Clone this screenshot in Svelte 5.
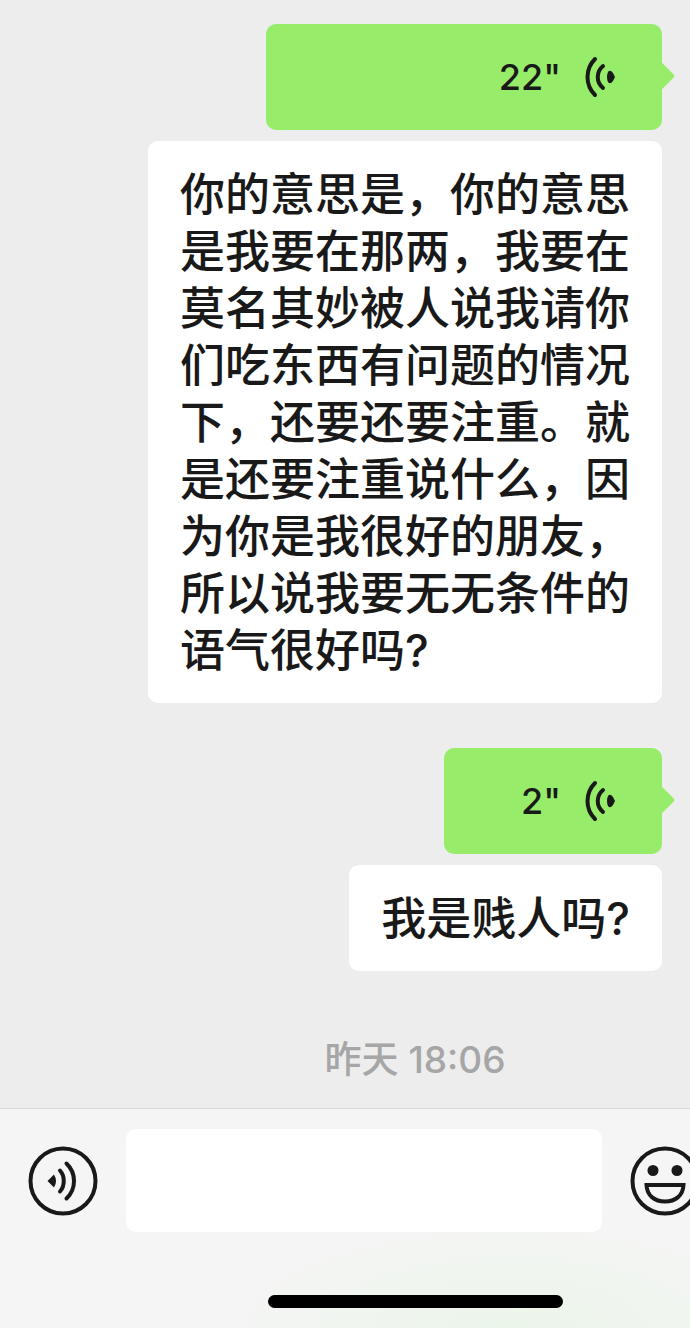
<script lang="ts">
    type Message = {
        id: number;
        seconds: number;
        size: "long" | "short";
        transcript: string;
    };

    const messages: Message[] = [
        {
            id: 1,
            seconds: 22,
            size: "long",
            transcript:
                "你的意思是，你的意思是我要在那两，我要在莫名其妙被人说我请你们吃东西有问题的情况下，还要还要注重。就是还要注重说什么，因为你是我很好的朋友，所以说我要无无条件的语气很好吗?",
        },
        { id: 2, seconds: 2, size: "short", transcript: "我是贱人吗?" },
    ];

    let draft = $state("");
</script>

<div class="screen">
    <main class="chat">
        {#each messages as message (message.id)}
            <div class="message">
                <button class="voice {message.size}" aria-label="播放语音 {message.seconds} 秒">
                    <span>{message.seconds}"</span>
                    <svg class="wave" viewBox="0 0 32 42" aria-hidden="true">
                        <path d="M11 3C1 13 1 29 11 39" stroke-width="4" />
                        <path d="M19 10C12 16 12 26 19 32" stroke-width="4" />
                        <path class="dot" d="M24 16Q26 13 29 17L31 21L29 25Q26 29 24 26Q22 21 24 16Z" />
                    </svg>
                </button>
                <p class="transcript">{message.transcript}</p>
            </div>
        {/each}
        <time class="time">昨天 18:06</time>
    </main>

    <footer class="composer">
        <div class="row">
            <button class="icon" aria-label="语音输入">
                <svg viewBox="0 0 70 70" aria-hidden="true">
                    <circle cx="35" cy="35" r="32.5" />
                    <path class="solid" d="M19.5 35L26 28.5Q30 35 26 41.5Z" />
                    <path d="M32 24.5C37 30 37 40 32 45.5" />
                    <path d="M38.5 17.5C48.5 27 48.5 43 38.5 52.5" />
                </svg>
            </button>
            <input type="text" aria-label="消息" bind:value={draft} />
            <button class="icon" aria-label="表情">
                <svg viewBox="0 0 70 70" aria-hidden="true">
                    <circle cx="35" cy="35" r="32.5" />
                    <circle class="solid" cx="23" cy="24.5" r="5.5" />
                    <circle class="solid" cx="47" cy="24.5" r="5.5" />
                    <path class="mouth" d="M16.5 39H53.5C53 50 45 55.5 35 55.5S17 50 16.5 39Z" />
                </svg>
            </button>
        </div>
        <div class="home"><span></span></div>
    </footer>
</div>

<style>
    :global(body) {
        margin: 0;
        background: #ededed;
    }

    .screen {
        display: flex;
        flex-direction: column;
        min-height: 100vh;
        overflow-x: hidden;
        font-family: Inter, "Noto Sans CJK SC", sans-serif;
        color: #191919;
    }

    button {
        padding: 0;
        border: 0;
        font: inherit;
        color: inherit;
        cursor: pointer;
    }

    svg {
        display: block;
        fill: none;
        stroke: currentColor;
        stroke-linecap: round;
    }

    .chat {
        flex: 1;
        display: flex;
        flex-direction: column;
        padding: 24px 28px;
    }

    .message {
        display: flex;
        flex-direction: column;
        align-items: flex-end;
        gap: 11px;
        margin-bottom: 45px;
    }

    .voice {
        position: relative;
        display: flex;
        align-items: center;
        justify-content: flex-end;
        gap: 23px;
        height: 106px;
        padding-right: 46px;
        border-radius: 10px;
        background: #97ec6a;
        font-size: 36px;
        font-weight: 500;
        line-height: 48px;
    }

    .voice.long {
        width: 396px;
    }

    .voice.short {
        width: 218px;
    }

    /* bubble tail */
    .voice::after {
        content: "";
        position: absolute;
        top: 42px;
        right: -9px;
        width: 20px;
        height: 20px;
        border-radius: 2px;
        background: #97ec6a;
        transform: rotate(45deg);
    }

    .wave {
        width: 32px;
        height: 42px;
    }

    .dot,
    .solid {
        fill: currentColor;
        stroke: none;
    }

    .transcript {
        box-sizing: border-box;
        max-width: 514px;
        margin: 0;
        padding: 25px 32px 24px;
        border-radius: 10px;
        background: #ffffff;
        font-size: 45px;
        font-weight: 500;
        line-height: 57px;
    }

    .time {
        margin-top: 20px;
        padding-left: 140px;
        text-align: center;
        font-size: 37px;
        font-weight: 500;
        line-height: 48px;
        color: #a6a6a6;
    }

    .composer {
        padding: 20px 28px;
        border-top: 1px solid #d8d8da;
        background:
            radial-gradient(ellipse 300px 110px at 74% 100%, #ebf5e9, transparent),
            #f5f5f5;
    }

    .row {
        display: flex;
        align-items: center;
        gap: 28px;
        margin-right: -38px;
    }

    .icon {
        flex-shrink: 0;
        width: 70px;
        height: 70px;
        background: none;
    }

    .icon svg {
        width: 70px;
        height: 70px;
        stroke-width: 4;
    }

    .mouth {
        stroke-linejoin: miter;
    }

    input {
        flex: 1;
        min-width: 0;
        box-sizing: border-box;
        height: 103px;
        padding: 0 24px;
        border: 0;
        border-radius: 10px;
        outline: none;
        background: #ffffff;
        font: inherit;
        font-size: 40px;
        color: inherit;
    }

    .home {
        display: flex;
        justify-content: center;
        padding: 63px 0 0 140px;
    }

    .home span {
        width: 295px;
        height: 13px;
        border-radius: 7px;
        background: #000000;
    }
</style>
